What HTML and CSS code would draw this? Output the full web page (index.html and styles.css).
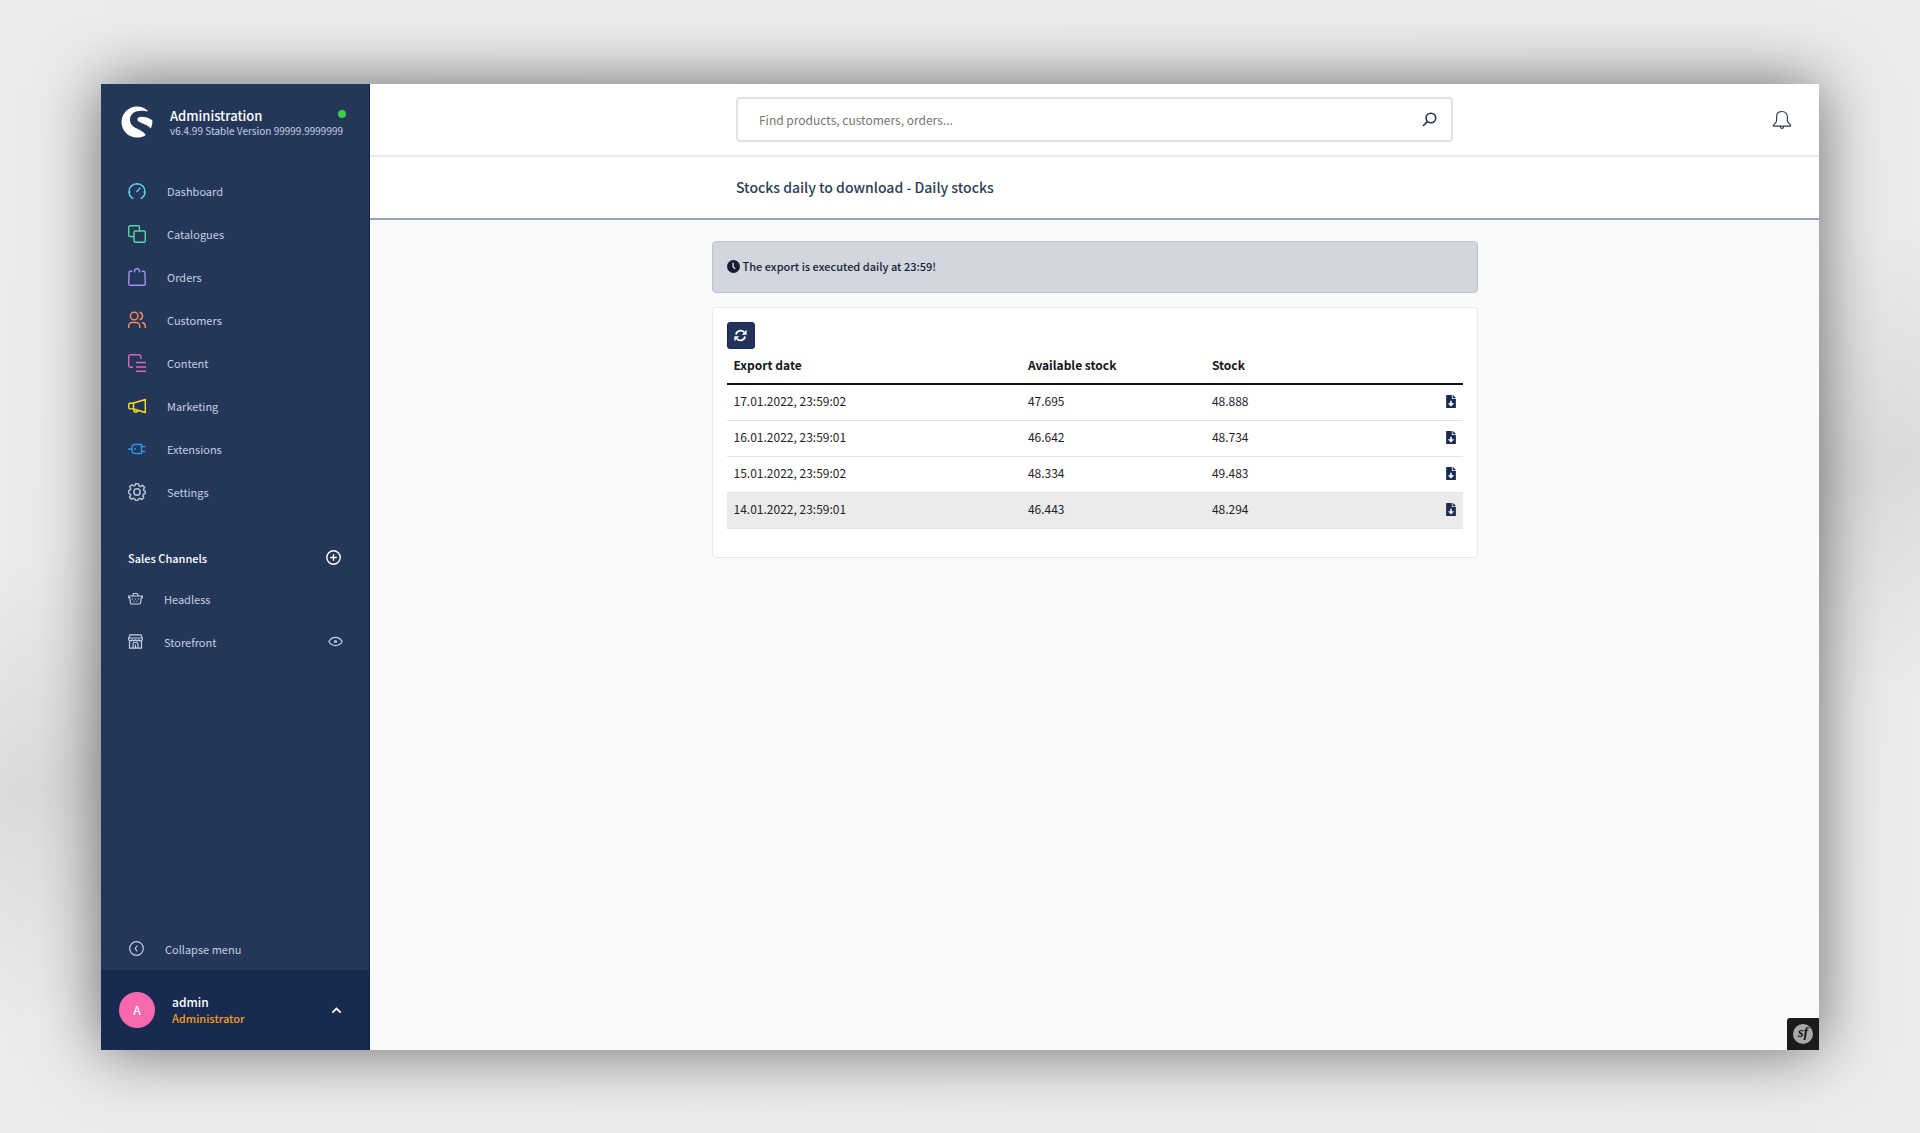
FILE: index.html
```html
<!DOCTYPE html>
<html lang="en">
<head>
<meta charset="utf-8">
<title>Stocks daily to download - Daily stocks</title>
<link rel="stylesheet" href="styles.css">
</head>
<body>
<svg class="sprite" aria-hidden="true">
  <symbol id="file-download" viewBox="0 0 384 512">
    <path d="M224 136V0H24C10.700 0 0 10.700 0 24v464c0 13.300 10.700 24 24 24h336c13.300 0 24-10.700 24-24V160H248c-13.200 0-24-10.800-24-24zm76.450 211.360l-96.420 95.700c-6.650 6.610-17.390 6.610-24.040 0l-96.420-95.700C73.420 337.290 80.540 320 94.820 320H160v-80c0-8.840 7.160-16 16-16h32c8.840 0 16 7.160 16 16v80h65.180c14.280 0 21.400 17.290 11.270 27.360zM377 105L279.100 7c-4.500-4.500-10.600-7-17-7H256v128h128v-6.100c0-6.300-2.500-12.400-7-16.900z"/>
  </symbol>
</svg>

<div class="window">
  <aside class="sidebar">
    <header class="brand">
      <svg class="brand-logo" viewBox="0 0 32 32" aria-hidden="true">
        <path fill="#fff" d="M26.500 4.400C23.700 1.800 20 .4 16 .4 7.400.4.500 7.400.500 16S7.400 31.600 16 31.600c3.200 0 6.300-1 8.800-2.700-2-3-5.600-4.600-9-6.300C11.700 20.600 9 18 9 13.700c0-5.700 4.700-9 11.500-9 2.200 0 4.300.1 6 .8.300-.2.300-.8 0-1.100z"/>
        <path fill="#fff" d="M31.300 14.200c-3-2.500-7.200-3.500-10.600-3.500-2.600 0-4.300 1-4.300 2.500 0 2.200 2.600 3.200 5.800 4.600 3 1.300 5.800 2.400 7.500 4.700 1.300-2.400 1.900-5.500 1.600-8.300z"/>
      </svg>
      <div class="brand-text">
        <div class="brand-row">
          <p class="brand-name">Administration</p>
          <span class="status-dot" role="status" aria-label="Online"></span>
        </div>
        <p class="brand-version">v6.4.99 Stable Version 99999.9999999</p>
      </div>
    </header>

    <nav class="menu" aria-label="Main">
      <a class="menu-item" href="#"><svg class="icon cyan" viewBox="0 0 18 18"><path d="M5.500 16.300H4.200a8.100 8.100 0 1 1 9.600 0h-1.300M8.500 10l3.800-4.300M9 1v1.800M3.300 3.600l1 1M14.700 3.600l-.8.800M1 10h1.500M17 10h-1.500"/></svg>Dashboard</a>
      <a class="menu-item" href="#"><svg class="icon green" viewBox="0 0 18 18"><path d="M6 11.500H2.200A1.500 1.500 0 0 1 .7 10V2.200A1.500 1.500 0 0 1 2.200.7H10a1.500 1.500 0 0 1 1.500 1.500V6"/><rect x="6" y="6" width="11.300" height="11.300" rx="1.500"/></svg>Catalogues</a>
      <a class="menu-item" href="#"><svg class="icon violet" viewBox="0 0 18 18"><path d="M4.300 3.300H2.400c-.8 0-1.300.4-1.300 1.200L.7 15.800c0 1 .5 1.500 1.500 1.500h13.600c1 0 1.500-.5 1.500-1.500l-.4-11.300c0-.8-.5-1.200-1.300-1.200h-1.900M6.600 4.600V2.800A2.400 2 0 0 1 11.400 2.800v1.800M6.600 3.300h-.8M11.400 3.300h.8"/></svg>Orders</a>
      <a class="menu-item" href="#"><svg class="icon orange" viewBox="0 0 18 18"><circle cx="6.200" cy="5" r="3.800"/><path d="M.7 17v-2a3.500 3.500 0 0 1 3.500-3.500h4a3.500 3.500 0 0 1 3.500 3.500v2M11.500 1.200a3.900 3.900 0 0 1 0 7.600M14 11.700a3.400 3.400 0 0 1 3.300 3.300v2"/></svg>Customers</a>
      <a class="menu-item" href="#"><svg class="icon pink" viewBox="0 0 18 18"><path d="M5 13.300H2.500A1.800 1.800 0 0 1 .7 11.500v-9A1.800 1.800 0 0 1 2.500.7H11a1.800 1.800 0 0 1 1.800 1.800V5M8 8.500h10M8 13h10M8 17.300h10"/></svg>Content</a>
      <a class="menu-item" href="#"><svg class="icon yellow" viewBox="0 0 18 18"><path d="M5.500 6L17.300 2.500v13L5.500 12zM5.500 6.200H2A1.200 1.200 0 0 0 .8 7.400v3.300c0 .7.500 1.200 1.200 1.200h3.500M5.800 12.200v1.300a1.500 1.500 0 0 0 1.500 1.500h1.200c.9 0 1.400-.6 1.500-1.700"/></svg>Marketing</a>
      <a class="menu-item" href="#"><svg class="icon blue" viewBox="0 0 18 18"><path d="M0 9h4M13.500 4.500H6.800A2.800 2.800 0 0 0 4 7.300v3.400a2.800 2.800 0 0 0 2.800 2.800h6.700zM13.500 6.500h3.700M13.500 11.500h3.700M7 8v2"/></svg>Extensions</a>
      <a class="menu-item" href="#"><svg class="icon gray" viewBox="0 0 24 24"><circle cx="12" cy="12" r="4.200"/><path d="M10 1h4l.8 3 1.900.8L19.500 3l2.600 2.800-1.500 2.700.8 1.900L23 11v3l-2.400.9-.8 1.900L21 19.500 18.500 22l-2.700-1.500-1.900.8L13 23.300h-3l-.9-2.200-1.900-.8L4.500 21.700 2 19l1.500-2.500-.8-1.900L.8 13.500v-3.300l2-.8.8-1.900L2.200 5 5 2.400l2.500 1.500 1.900-.8z"/></svg>Settings</a>
    </nav>

    <section class="channels" aria-label="Sales Channels">
      <div class="channels-head">
        <h2>Sales Channels</h2>
        <button type="button" class="plain-button" aria-label="Add sales channel"><svg class="icon-small bright" viewBox="0 0 15 15"><circle cx="7.500" cy="7.500" r="6.700"/><path d="M7.500 4.200v6.600M4.200 7.500h6.600"/></svg></button>
      </div>
      <div class="channel">
        <a class="channel-link" href="#"><svg class="icon-small" viewBox="0 0 15 15"><path d="M.7 5h13.600v1.700h-1L12.500 12c-.1.700-.5 1-1.200 1H3.700c-.7 0-1.100-.3-1.200-1L1.700 6.700h-1zM4.500 5l1.300-2.500h3.400L10.500 5M4.500 7.500v1M7.500 7.500v1M10.500 7.500v1M6 9.800v1M9 9.800v1"/></svg>Headless</a>
      </div>
      <div class="channel">
        <a class="channel-link" href="#"><svg class="icon-small" viewBox="0 0 15 15"><path d="M2 .8h11L14.300 4v1.500a1.800 1.800 0 0 1-3.500 0 1.700 1.700 0 0 1-3.300 0 1.700 1.700 0 0 1-3.300 0 1.800 1.800 0 0 1-3.500 0V4zM.9 4h13.200M1.500 7.500v6.700h12V7.500M5 14V10a1.500 1.500 0 0 1 1.500-1.500h2A1.500 1.500 0 0 1 10 10v4M7.500 10.500V14"/></svg>Storefront</a>
        <button type="button" class="plain-button" aria-label="Open storefront"><svg class="icon-small" viewBox="0 0 15 15"><path d="M.8 7.500C2.500 4.700 4.800 3.400 7.500 3.400s5 1.300 6.700 4.100c-1.700 2.800-4 4.100-6.700 4.100S2.500 10.300.8 7.500z"/><circle cx="7.500" cy="7.500" r="1"/></svg></button>
      </div>
    </section>

    <button type="button" class="collapse"><svg class="icon-small" viewBox="0 0 15 15"><circle cx="7.500" cy="7.500" r="6.800"/><path d="M8.300 4.500L6.200 7.500l2.100 3"/></svg>Collapse menu</button>

    <footer class="user">
      <span class="avatar" aria-hidden="true">A</span>
      <div class="user-text">
        <p class="user-name">admin</p>
        <p class="user-role">Administrator</p>
      </div>
      <button type="button" class="plain-button" aria-label="User menu"><svg class="chevron" viewBox="0 0 10 10"><path d="M1.200 7L5 3.200 8.800 7"/></svg></button>
    </footer>
  </aside>

  <main class="main">
    <header class="topbar">
      <form class="search" role="search">
        <input type="search" aria-label="Search" placeholder="Find products, customers, orders...">
        <button type="submit" class="plain-button" aria-label="Search"><svg class="icon-dark" viewBox="0 0 15 15"><circle cx="8.900" cy="6" r="4.800"/><path d="M5.500 9.400L1 14"/></svg></button>
      </form>
      <button type="button" class="plain-button bell" aria-label="Notifications"><svg viewBox="0 0 20 20"><path d="M10 1.500c-3.400 0-5.400 2.400-5.400 5.500v3.500c0 2-2 3-3.100 4.700-.3.600 0 1 .6 1h15.800c.6 0 .9-.4.6-1-1.100-1.700-3.100-2.700-3.100-4.700V7c0-3.100-2-5.500-5.400-5.500zM8.300 16.500c.2 1.400.8 2 1.700 2s1.500-.6 1.700-2"/></svg></button>
    </header>
    <div class="titlebar"><h1>Stocks daily to download - Daily stocks</h1></div>

    <div class="content">
      <p class="notice"><svg viewBox="0 0 16 16" aria-hidden="true"><circle cx="8" cy="8" r="8"/><path d="M7.500 3.300V8.600l2.700 2.200"/></svg>The export is executed daily at 23:59!</p>

      <section class="card">
        <button type="button" class="refresh" aria-label="Refresh"><svg viewBox="0 0 16 16" aria-hidden="true"><path class="arc" d="M2.400 6.800A5.800 5.800 0 0 1 12.500 4M13.600 9.200A5.800 5.800 0 0 1 3.500 12"/><path class="head" d="M15.500 1v6H9.500zM.5 15V9h6z"/></svg></button>
        <table class="exports">
          <thead>
            <tr><th class="date">Export date</th><th class="count">Available stock</th><th class="count">Stock</th><th aria-label="Download"></th></tr>
          </thead>
          <tbody>
            <tr><td>17.01.2022, 23:59:02</td><td>47.695</td><td>48.888</td><td class="action"><a href="#" aria-label="Download"><svg><use href="#file-download"/></svg></a></td></tr>
            <tr><td>16.01.2022, 23:59:01</td><td>46.642</td><td>48.734</td><td class="action"><a href="#" aria-label="Download"><svg><use href="#file-download"/></svg></a></td></tr>
            <tr><td>15.01.2022, 23:59:02</td><td>48.334</td><td>49.483</td><td class="action"><a href="#" aria-label="Download"><svg><use href="#file-download"/></svg></a></td></tr>
            <tr class="active"><td>14.01.2022, 23:59:01</td><td>46.443</td><td>48.294</td><td class="action"><a href="#" aria-label="Download"><svg><use href="#file-download"/></svg></a></td></tr>
          </tbody>
        </table>
      </section>
    </div>
  </main>
  <a class="toolbar-badge" href="#" aria-label="Open toolbar"><span>sf</span></a>
</div>
</body>
</html>
```
FILE: styles.css
```css
* { box-sizing: border-box; }

body {
  margin: 0;
  min-height: 100vh;
  padding: 84px 101px 83px;
  display: flex;
  font: 12px/16px "Noto Sans CJK SC", "Noto Sans", sans-serif;
  color: #1f2328;
  background: linear-gradient(170deg, #ececec 0%, #ebebeb 38%, #dbdbdb 54%, #ebebeb 70%, #ececec 100%);
}

p, h1, h2 { margin: 0; }
a { color: inherit; text-decoration: none; }
svg { display: block; flex: none; fill: none; }
button { font: inherit; color: inherit; cursor: pointer; }

.sprite { position: absolute; width: 0; height: 0; }
.plain-button { padding: 0; border: 0; background: none; }

.window {
  position: relative;
  flex: 1;
  display: flex;
  background: #f9fafb;
  box-shadow: 0 0 60px rgba(0, 0, 0, .55);
}

/* Sidebar */
.sidebar {
  width: 269px;
  flex: none;
  display: flex;
  flex-direction: column;
  background: #243758;
  border-right: 1px solid #10204a;
  color: #c3cfe4;
  font-size: 11px;
}

.brand { display: flex; padding: 22px 23px 0 20px; height: 85px; }
.brand-logo { width: 32px; height: 32px; }
.brand-text { margin: 2px 0 0 17px; flex: 1; min-width: 0; white-space: nowrap; }
.brand-row { display: flex; align-items: center; justify-content: space-between; }
.brand-name { font-size: 13px; font-weight: 500; color: #fff; }
.brand-version { font-size: 10px; line-height: 14px; }
.status-dot { width: 8px; height: 8px; margin-bottom: 4px; border-radius: 50%; background: #37d046; }

.menu-item { display: flex; align-items: center; gap: 21px; height: 43px; padding-left: 27px; }
.icon { width: 18px; height: 18px; stroke-width: 1.4; stroke-linejoin: round; }
.cyan { stroke: #5fd3ee; }
.green { stroke: #57d9a3; }
.violet { stroke: #a092f0; }
.orange { stroke: #f88962; }
.pink { stroke: #d965c6; }
.yellow { stroke: #fce122; }
.blue { stroke: #2f95e8; }
.gray { stroke: #b4c0d2; stroke-width: 2; }

.channels { margin-top: 25px; }
.channels-head { display: flex; align-items: center; justify-content: space-between; height: 39px; padding: 0 28px 0 27px; }
.channels-head h2 { font-size: 11px; font-weight: 500; color: #fff; }
.channel { display: flex; align-items: center; justify-content: space-between; height: 43px; padding: 0 26px 0 27px; }
.channel-link { display: flex; align-items: center; gap: 21px; }
.icon-small { width: 15px; height: 15px; stroke: #c3cfe4; stroke-width: 1.200; }
.bright { stroke: #fff; stroke-width: 1.400; }

.collapse {
  display: flex;
  align-items: center;
  gap: 21px;
  height: 43px;
  margin-top: auto;
  padding: 0 28px;
  border: 0;
  background: none;
}
.user { display: flex; align-items: center; height: 80px; padding: 0 27px 0 18px; background: #182a50; }
.avatar {
  width: 36px;
  height: 36px;
  border-radius: 50%;
  background: #f768ad;
  color: #fff;
  font-size: 12px;
  font-weight: 500;
  line-height: 36px;
  text-align: center;
}
.user-text { flex: 1; margin-left: 17px; font-weight: 500; }
.user-name { font-size: 12px; color: #fff; }
.user-role { color: #f59e1b; }
.chevron { width: 11px; height: 11px; stroke: #fff; stroke-width: 1.600; }

/* Header */
.main { flex: 1; min-width: 0; }
.topbar { display: grid; grid-template-columns: 1fr 717px 1fr; align-items: center; height: 73px; background: #fff; border-bottom: 2px solid #e8ebee; }
.search {
  grid-column: 2;
  display: flex;
  align-items: center;
  height: 45px;
  padding: 0 14px 0 21px;
  border: 2px solid #dfe3e8;
  border-radius: 4px;
}
.search input { flex: 1; min-width: 0; padding: 0; border: 0; outline: 0; background: none; font: inherit; color: #333; }
.search input::placeholder { color: #757575; opacity: 1; }
.icon-dark { width: 15px; height: 15px; stroke: #22344f; stroke-width: 1.600; }
.bell { justify-self: end; margin-right: 27px; }
.bell svg { width: 20px; height: 20px; stroke: #2b3d55; stroke-width: 1.200; }
.titlebar { height: 63px; padding: 20px 0; background: #fff; border-bottom: 2px solid #95a3b2; }
.titlebar h1 { width: 717px; margin: 0 auto; font-size: 14px; line-height: 20px; font-weight: 500; color: #2c3e55; }

/* Content */
.content { width: 766px; margin: 0 auto; padding: 21px 0; }
.notice {
  display: flex;
  align-items: center;
  gap: 3px;
  height: 52px;
  padding: 0 14px 2px;
  border: 1px solid #bcc3cc;
  border-radius: 4px;
  background: #d1d6df;
  color: #1a2234;
  font-size: 11px;
  font-weight: 500;
}
.notice svg { width: 13px; height: 13px; }
.notice circle { fill: #141d33; }
.notice path { stroke: #d1d6df; stroke-width: 1.800; }

.card { margin-top: 14px; padding: 14px 14px 28px; border: 1px solid #e6e9ed; border-radius: 4px; background: #fff; }
.refresh {
  display: grid;
  place-items: center;
  width: 28px;
  height: 27px;
  padding: 0;
  border: 1px solid #182a50;
  border-radius: 3px;
  background: #22335b;
}
.refresh svg { width: 13px; height: 13px; }
.refresh .arc { stroke: #fff; stroke-width: 2.200; }
.refresh .head { fill: #fff; }

.exports { width: 100%; table-layout: fixed; border-collapse: collapse; }
.exports th, .exports td { height: 36px; padding: 0 7px 2px; text-align: left; border-bottom: 1px solid #dfe2e5; }
.exports th { height: 35px; border-bottom: 2px solid #14161a; font-weight: 700; color: #14161a; }
.exports .date { width: 40%; }
.exports .count { width: 25%; }
.exports .active { background: #ebebeb; }
.exports .action svg { width: 10px; height: 13px; margin-left: auto; fill: #1a2b52; }

.toolbar-badge {
  position: absolute;
  right: 0;
  bottom: 0;
  display: grid;
  place-items: center;
  width: 32px;
  height: 32px;
  border-top-left-radius: 3px;
  background: #1b1b1b;
}
.toolbar-badge span {
  width: 20px;
  height: 20px;
  border-radius: 50%;
  background: #a8a8a8;
  color: #111;
  font: italic bold 14px/18px "Liberation Serif", serif;
  text-align: center;
}
```
